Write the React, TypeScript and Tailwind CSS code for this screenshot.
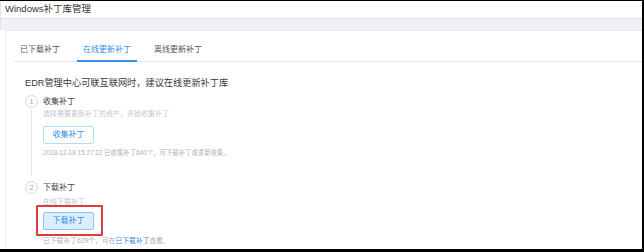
import React from 'react';

const font = { fontFamily: '"Liberation Sans", "Noto Sans CJK SC", sans-serif' };

const tabs = ['已下载补丁', '在线更新补丁', '离线更新补丁'];

const StepCircle: React.FC<{ n: number }> = ({ n }) => (
    <div className="w-[13px] h-[13px] rounded-full border border-[#d6d8dc] flex items-center justify-center text-[8px] leading-none text-[#a9acb2] bg-white">
        {n}
    </div>
);

export default function App() {
    return (
        <div
            className="w-[644px] h-[252px] flex flex-col bg-white border-t border-r-2 border-b-[3px] border-black overflow-hidden"
            style={font}
        >
            {/* Title bar */}
            <div className="h-[17px] flex items-center pl-[4px] border-l border-[#e4e4e4] text-[9.5px] text-[#333]">
                Windows补丁库管理
            </div>
            <div className="h-[12px] bg-[#f1f1f5] border-t border-[#e1e1e6] border-l border-l-[#e4e4e4]" />

            {/* Card */}
            <div className="flex-1 flex flex-col ml-[5px] border-l border-t border-[#ededf0] bg-white">
                {/* Tabs */}
                <div className="ml-[8px] flex gap-[11px] border-b border-[#e4e7ed]">
                    {tabs.map((t, i) => (
                        <div
                            key={t}
                            className={
                                i === 1
                                    ? 'px-[6px] pt-[14px] pb-[5px] leading-[10px] text-[8px] text-[#3a8ee6] border-b-2 border-[#3a8ee6] -mb-px'
                                    : 'px-[6px] pt-[14px] pb-[5px] leading-[10px] text-[8px] text-[#555] border-b-2 border-transparent -mb-px'
                            }
                        >
                            {t}
                        </div>
                    ))}
                </div>

                <div className="pl-[19px] pt-[14px]">
                    <div className="text-[9.2px] leading-[14px] text-[#3a3a3a]">
                        EDR管理中心可联互联网时，建议在线更新补丁库
                    </div>

                    {/* Step 1 */}
                    <div className="mt-[5px] flex">
                        <div className="flex flex-col items-center w-[13px]">
                            <StepCircle n={1} />
                            <div className="flex-1 w-px bg-[#e4e6ea] mt-px mb-[5px]" />
                        </div>
                        <div className="pl-[5px] pb-[23px]">
                            <div className="h-[13px] flex items-center text-[8px] text-[#444]">收集补丁</div>
                            <div className="mt-px leading-[10px] text-[7px] text-[#c4c7cd]">
                                选择需要更新补丁的资产，开始收集补丁
                            </div>
                            <button className="mt-[7px] w-[51px] h-[18px] rounded-[2px] border border-[#b9dbf6] bg-white text-[8px] text-[#3a8ee6] flex items-center justify-center">
                                收集补丁
                            </button>
                            <div className="mt-[4px] leading-[10px] text-[6.4px] text-[#aeb1b7] whitespace-nowrap">
                                2018-12-18 15:27:22 已收集补丁640个，可下载补丁或重新收集。
                            </div>
                        </div>
                    </div>

                    {/* Step 2 */}
                    <div className="flex">
                        <div className="flex flex-col items-center w-[13px]">
                            <StepCircle n={2} />
                        </div>
                        <div className="pl-[5px]">
                            <div className="h-[13px] flex items-center text-[8px] text-[#444]">下载补丁</div>
                            <div className="mt-[3px] leading-[10px] text-[7px] text-[#c4c7cd]">在线下载补丁</div>
                            <div className="relative mt-[5px] w-[51px]">
                                <button className="w-[51px] h-[18px] rounded-[2px] border border-[#8fc4ef] bg-[#dcedfb] text-[8px] text-[#3a8ee6] flex items-center justify-center">
                                    下载补丁
                                </button>
                                <div className="absolute -left-[7px] -top-[7px] w-[67px] h-[31px] border-2 border-[#e03b3b] rounded-[1px]" />
                            </div>
                            <div className="mt-[6px] leading-[10px] text-[6.8px] text-[#aeb1b7] whitespace-nowrap">
                                已下载补丁629个，可在<span className="text-[#3a8ee6]">已下载补丁</span>查看。
                            </div>
                        </div>
                    </div>
                </div>
            </div>
        </div>
    );
}
